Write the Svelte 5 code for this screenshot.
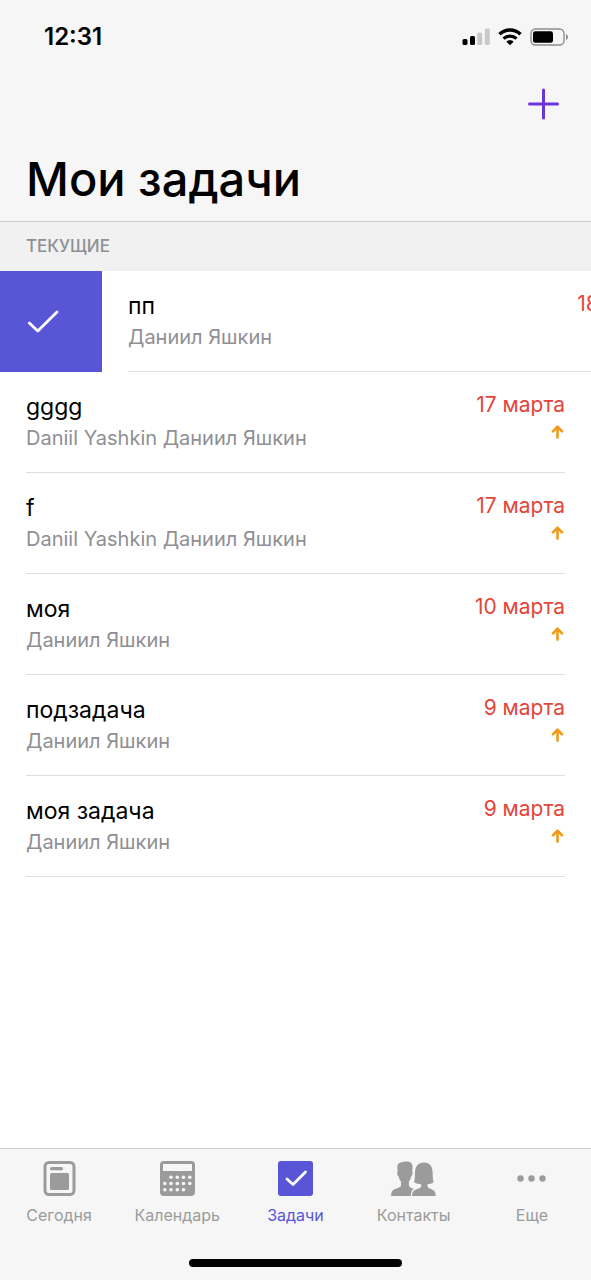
<script>
  const tasks = [
    { title: 'пп', people: 'Даниил Яшкин', due: '18 марта', swiped: true },
    { title: 'gggg', people: 'Daniil Yashkin Даниил Яшкин', due: '17 марта' },
    { title: 'f', people: 'Daniil Yashkin Даниил Яшкин', due: '17 марта' },
    { title: 'моя', people: 'Даниил Яшкин', due: '10 марта' },
    { title: 'подзадача', people: 'Даниил Яшкин', due: '9 марта' },
    { title: 'моя задача', people: 'Даниил Яшкин', due: '9 марта' }
  ];

  const tabs = [
    { id: 'today', label: 'Сегодня' },
    { id: 'calendar', label: 'Календарь' },
    { id: 'tasks', label: 'Задачи' },
    { id: 'contacts', label: 'Контакты' },
    { id: 'more', label: 'Еще' }
  ];

  // Day dots on the calendar icon: the columns that each row fills
  const dayRows = [
    { y: 17.3, columns: [16.5, 22.8, 29, 35.3] },
    { y: 23.5, columns: [10.3, 16.5, 22.8, 29, 35.3] },
    { y: 29.7, columns: [10.3, 16.5, 22.8, 29] }
  ];

  let active = $state('tasks');
</script>

<div class="app">
  <header>
    <div class="status">
      <time>12:31</time>
      <div class="indicators">
        <svg width="28" height="18" viewBox="0 0 28 18" aria-hidden="true">
          <rect x="0.5" y="11" width="5" height="6" rx="1.5" />
          <rect x="8" y="8" width="5" height="9" rx="1.5" />
          <rect x="15.2" y="4.5" width="5" height="12.5" rx="1.5" fill="#c9c9c9" />
          <rect x="22.8" y="0.5" width="5" height="16.5" rx="1.5" fill="#c9c9c9" />
        </svg>
        <svg width="24" height="18" viewBox="0 0 24 18" aria-hidden="true">
          <path d="M1.5 6.2C7.3.6 16.7.6 22.5 6.2" fill="none" stroke="#000" stroke-width="3.4" />
          <path d="M5.5 10.6c3.7-3.4 9.3-3.4 13 0" fill="none" stroke="#000" stroke-width="3.2" />
          <path d="M8.4 13.7c2-1.9 5.2-1.9 7.2 0L12 17.2z" />
        </svg>
        <svg width="39" height="18" viewBox="0 0 39 18" aria-hidden="true">
          <rect x="1" y="1" width="33" height="16" rx="4.5" fill="none" stroke="#8e8e8e" stroke-width="1.4" />
          <rect x="3" y="3.2" width="20" height="11.6" rx="2.2" />
          <path d="M36 6c2.6 1 2.6 5 0 6z" fill="#8e8e8e" />
        </svg>
      </div>
    </div>
    <div class="actions">
      <button class="add" aria-label="Добавить задачу">
        <svg width="32" height="32" viewBox="0 0 32 32" fill="none" stroke="#6a35d9" stroke-width="3" stroke-linecap="round">
          <path d="M16.5 2v28M2.5 16h28" />
        </svg>
      </button>
    </div>
    <h1>Мои задачи</h1>
  </header>

  <main>
    <h2>Текущие</h2>
    <ul>
      {#each tasks as task}
        <li>
          {#if task.swiped}
            <button class="done" aria-label="Выполнить">
              <svg width="34" height="26" viewBox="0 0 34 26" fill="none" stroke="#fff" stroke-width="2.8" stroke-linecap="round" stroke-linejoin="round">
                <path d="M3.3 14l8.5 8L31 3" />
              </svg>
            </button>
          {/if}
          <article>
            <div class="row">
              <div class="info">
                <h3>{task.title}</h3>
                <p>{task.people}</p>
              </div>
              <div class="due">
                <span>{task.due}</span>
                <svg width="14" height="14" viewBox="0 0 14 14" fill="none" stroke="#f09a1a" stroke-width="2.6" stroke-linecap="round" stroke-linejoin="round">
                  <path d="M6.5 12.6V2M2 6.4L6.5 1.6l4.5 4.8" />
                </svg>
              </div>
            </div>
          </article>
        </li>
      {/each}
    </ul>
  </main>

  <footer>
    <nav>
      {#each tabs as tab}
        <button class="tab" class:active={active === tab.id} onclick={() => (active = tab.id)}>
          <svg width="45" height="38" viewBox="0.5 0 45 38" fill="currentColor" aria-hidden="true">
            {#if tab.id === 'today'}
              <rect x="8.5" y="2.5" width="29" height="32" rx="4" fill="none" stroke="currentColor" stroke-width="3" />
              <rect x="13.5" y="7" width="13" height="3.2" rx="1.5" />
              <rect x="13.5" y="13" width="19" height="17" rx="1.5" />
            {:else if tab.id === 'calendar'}
              <rect x="5.5" y="1" width="35" height="35" rx="4" />
              <rect x="8.5" y="4" width="29" height="7" fill="#f6f6f6" />
              {#each dayRows as row}
                {#each row.columns as x}
                  <circle cx={x} cy={row.y} r="1.8" fill="#f6f6f6" />
                {/each}
              {/each}
            {:else if tab.id === 'tasks'}
              <rect x="5.5" y="1" width="35" height="35" rx="3" />
              <path d="M14.5 19l6 5.5L33 12" fill="none" stroke="#fff" stroke-width="2.8" stroke-linecap="round" stroke-linejoin="round" />
            {:else if tab.id === 'contacts'}
              <path d="M.6 36C.6 32.500 1 31 3.500 29.500C6 28.200 10.500 27.800 10.500 25V21.500C9.300 20.300 8.500 18.500 8.200 16.500C6.600 15.700 6.200 12.500 7.200 11C6.600 7.500 6.600 5 8.200 3.600C11 1.200 18 .8 20.500 2.800C22.400 4.500 22.200 7.500 21.700 11C22.600 12.500 22 15.700 20.600 16.500C20.300 18.500 19.600 20.300 18.400 21.500V25C18.400 27 20.500 28 23.200 28.800C21.200 30.500 20.500 32 20.300 36z" />
              <path d="M21.500 36C21.500 32.500 22.500 31 25 29.800C27.500 28.500 30.700 28.200 30.700 25.500V24.300C28 24.300 25.500 23.600 23.600 22.300C24.600 19 24.200 15 24.600 11C25 6 28.500 2.600 33.600 2.600C38.700 2.600 41.600 6 42 11C42.400 15 42 19 43.200 22.300C41.400 23.600 39.500 24.300 37 24.300V25.500C37 28.200 39.700 28.500 42 29.800C44.300 31 45.200 32.500 45.200 36z" />
            {:else}
              <circle cx="12" cy="18.5" r="3.2" />
              <circle cx="23" cy="18.5" r="3.2" />
              <circle cx="34" cy="18.5" r="3.2" />
            {/if}
          </svg>
          <span>{tab.label}</span>
        </button>
      {/each}
    </nav>
    <div class="home"></div>
  </footer>
</div>

<style>
  :global(body) {
    margin: 0;
    background: #fff;
  }

  .app {
    display: flex;
    flex-direction: column;
    min-height: 100vh;
    font-family: Inter, 'Noto Sans', sans-serif;
    color: #000;
  }

  button {
    margin: 0;
    padding: 0;
    border: 0;
    background: none;
    font: inherit;
    color: inherit;
    cursor: pointer;
  }

  svg {
    display: block;
    flex: none;
  }

  header {
    background: #f6f6f6;
    border-bottom: 1px solid #cacaca;
  }

  .status {
    display: flex;
    justify-content: space-between;
    align-items: center;
    padding: 23px 22px 0 44px;
    font-size: 24px;
    line-height: 28px;
    font-weight: 600;
  }

  .indicators {
    display: flex;
    gap: 8px;
  }

  .actions {
    display: flex;
    justify-content: flex-end;
    padding: 37px 32px 0;
  }

  h1 {
    margin: 0;
    padding: 29px 26px 12px;
    font-size: 47px;
    line-height: 60px;
    font-weight: 500;
  }

  main {
    flex: 1;
  }

  h2 {
    margin: 0;
    padding: 12px 26px;
    background: #f1f1f1;
    font-size: 17px;
    line-height: 25px;
    font-weight: 500;
    text-transform: uppercase;
    color: #8f8f94;
  }

  ul {
    margin: 0;
    padding: 0;
    list-style: none;
  }

  li {
    display: flex;
    overflow: hidden;
  }

  .done {
    flex: none;
    display: flex;
    align-items: center;
    width: 102px;
    padding-left: 26px;
    background: #5856d6;
  }

  article {
    flex: 0 0 100%;
    box-sizing: border-box;
    padding: 0 26px;
  }

  .row {
    display: flex;
    justify-content: space-between;
    padding: 19px 0;
    border-bottom: 1px solid #dedede;
  }

  h3 {
    margin: 0;
    font-size: 23px;
    line-height: 32px;
    font-weight: 400;
  }

  p {
    margin: 0;
    font-size: 20px;
    line-height: 30px;
    color: #8f8f94;
  }

  .due {
    display: flex;
    flex-direction: column;
    align-items: flex-end;
    gap: 6px;
    font-size: 21px;
    line-height: 28px;
    color: #e4453a;
  }

  footer {
    display: flex;
    flex-direction: column;
    align-items: center;
    gap: 32px;
    padding-bottom: 13px;
    background: #f6f6f6;
    border-top: 1px solid #cfcfcf;
  }

  nav {
    display: flex;
    width: 100%;
  }

  .tab {
    flex: 1 1 0;
    display: flex;
    flex-direction: column;
    align-items: center;
    gap: 5px;
    padding-top: 11px;
    font-size: 16px;
    line-height: 24px;
    color: #9b9b9b;
  }

  .active {
    color: #5856d6;
  }

  .home {
    width: 36%;
    height: 8px;
    border-radius: 4px;
    background: #000;
  }
</style>
